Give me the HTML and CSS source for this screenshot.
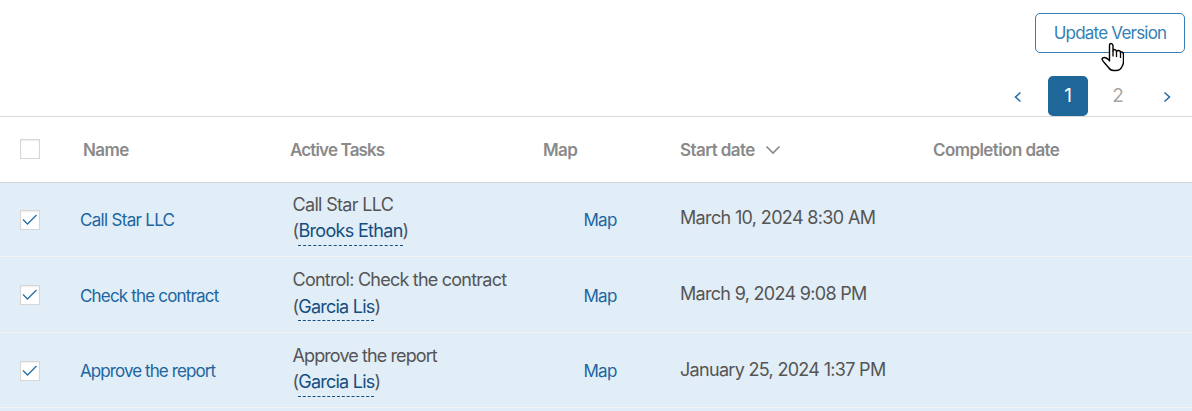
FILE: index.html
```
<!DOCTYPE html>
<html lang="en">
<head>
<meta charset="utf-8">
<title>Update Version</title>
<link rel="stylesheet" href="styles.css">
</head>
<body>
<div class="toolbar">
  <button class="update"><span>Update Version</span></button>
  <svg class="pointer" width="24" height="30" viewBox="0 0 24 30"><path d="M9.500 19.500V3.500Q9.500 1.500 11 1.500T13 3.500V9.500Q13 7.500 14.500 7.500T16.500 9.500V10Q16.500 8.500 18.500 8.500T20.500 10.500V11Q21 9.500 22 10Q23.500 10.500 23.500 12.500V19.500Q23.500 22 22 24.500Q20.500 28.500 16 28.500H13.500Q10.500 28.500 8.500 25.500L5 21.500Q2 18 2 17Q2.500 15.500 4.500 15.500Q6.500 15.500 9.500 18.500" fill="#fff" stroke="#000" stroke-width="1.400"/><path d="M13 9V14.500M16.500 9.500V15M20.500 10.500V16" stroke="#000" stroke-width="1.300"/></svg>
</div>
<nav class="pager">
  <svg class="arrow" width="10" height="12" viewBox="0 0 10 12"><path d="M7.500 1.500L2.500 6L7.500 10.500"/></svg>
  <span class="page current">1</span>
  <span class="page">2</span>
  <svg class="arrow" width="10" height="12" viewBox="0 0 10 12"><path d="M2.500 1.500L7.500 6L2.500 10.500"/></svg>
</nav>
<main class="table">
  <div class="row head">
    <div class="check"></div>
    <div class="h-name">Name</div>
    <div class="h-tasks">Active Tasks</div>
    <div class="h-map">Map</div>
    <div class="h-start"><span>Start date</span><svg width="16" height="10" viewBox="0 0 16 10"><path d="M1.500 1.500L8 8L14.500 1.500" fill="none" stroke="#8a8a8a" stroke-width="1.700"/></svg></div>
    <div class="h-end">Completion date</div>
  </div>
  <div class="row first">
    <div class="check"><svg width="18" height="18" viewBox="0 0 18 18"><path d="M2 8.500L6.500 13L15.500 4"/></svg></div>
    <a class="link name">Call Star LLC</a>
    <div class="task"><div class="title">Call Star LLC</div><div class="owner">(<a class="person">Brooks Ethan</a>)</div></div>
    <a class="link map">Map</a>
    <div class="date">March 10, 2024 8:30 AM</div>
  </div>
  <div class="row second">
    <div class="check"><svg width="18" height="18" viewBox="0 0 18 18"><path d="M2 8.500L6.500 13L15.500 4"/></svg></div>
    <a class="link name">Check the contract</a>
    <div class="task"><div class="title">Control: Check the contract</div><div class="owner">(<a class="person">Garcia Lis</a>)</div></div>
    <a class="link map">Map</a>
    <div class="date">March 9, 2024 9:08 PM</div>
  </div>
  <div class="row third">
    <div class="check"><svg width="18" height="18" viewBox="0 0 18 18"><path d="M2 8.500L6.500 13L15.500 4"/></svg></div>
    <a class="link name">Approve the report</a>
    <div class="task"><div class="title">Approve the report</div><div class="owner">(<a class="person">Garcia Lis</a>)</div></div>
    <a class="link map">Map</a>
    <div class="date">January 25, 2024 1:37 PM</div>
  </div>
  <div class="row next"></div>
</main>
</body>
</html>
```
FILE: styles.css
```
* { box-sizing: border-box; }
body {
  margin: 0;
  height: 411px;
  overflow: hidden;
  background: #fff;
  font-family: Inter, "Liberation Sans", sans-serif;
  color: #555;
  white-space: nowrap;
}
.toolbar {
  position: relative;
  display: flex;
  justify-content: flex-end;
  height: 76px;
  padding: 13px 7px 0 0;
}
.update {
  width: 150px;
  height: 40px;
  padding: 0;
  border: 1px solid #347fb5;
  border-radius: 5px;
  background: #fff;
  color: #347fb5;
  font: 17px/39px Inter, sans-serif;
  letter-spacing: -0.78px;
}
.pointer { position: absolute; left: 1100px; top: 42px; }
.pager {
  display: flex;
  align-items: center;
  height: 40px;
  padding-left: 1013px;
}
.arrow { fill: none; stroke: #2268a2; stroke-width: 1.5; margin-top: 2px; }
.page {
  width: 40px;
  line-height: 40px;
  font-size: 19px;
  text-align: center;
  color: #a5a5a5;
  margin-right: 10px;
}
.page.current {
  margin-left: 25px;
  border-radius: 5px;
  background: #1f6699;
  color: #fff;
}
.page + .arrow { margin-left: 14px; }
.row {
  display: grid;
  grid-template-columns: 80px 210px 253px 137px 253px 1fr;
  align-items: start;
  background: #e1edf7;
  border-bottom: 1px solid #f2f4f6;
}
.head {
  height: 67px;
  background: #fff;
  border-top: 1px solid #d9d9d9;
  border-bottom: 1px solid #d5d8da;
  color: #8a8a8a;
  font-size: 17px;
  font-weight: 600;
  line-height: 26px;
  letter-spacing: -0.58px;
}
.head > div { margin-top: 20px; }
.head .h-name { padding-left: 3px; }
.h-tasks { letter-spacing: -0.85px; }
.h-start { display: flex; align-items: center; gap: 10px; }
.check {
  width: 20px;
  height: 20px;
  margin: 27px 0 0 20px;
  border: 1px solid #d6d6d6;
  background: #fff;
  box-shadow: inset 0 1px 2px #eee;
}
.head > .check { margin-top: 22px; }
.check svg { display: block; fill: none; stroke: #2872aa; stroke-width: 1.4; }
.first { height: 74px; }
.second { height: 76px; }
.third { height: 75px; }
.next { height: 10px; }
.second .check, .third .check { margin-top: 28px; }
.link {
  padding-top: 24px;
  font-size: 17px;
  line-height: 26px;
  letter-spacing: -0.7px;
  color: #2065a0;
}
.second .link { padding-top: 26px; }
.third .link { padding-top: 25px; }
.second .name { letter-spacing: -0.82px; }
.third .name { letter-spacing: -0.92px; }
.map { text-align: center; padding-right: 23px; }
.task {
  padding: 9px 0 0 2.5px;
  font-size: 18px;
  line-height: 26px;
  letter-spacing: -0.68px;
}
.second .task, .third .task { padding-top: 10px; letter-spacing: -0.77px; }
.third .title { letter-spacing: -0.9px; }
.second .owner { line-height: 28px; }
.person {
  display: inline-block;
  height: 28px;
  color: #144d80;
  border-bottom: 1px dashed #144d80;
}
.owner { height: 28px; }
.date {
  padding-top: 22px;
  font-size: 18px;
  line-height: 26px;
  letter-spacing: -0.65px;
}
.second .date, .third .date { padding-top: 24px; letter-spacing: -0.69px; }
```
